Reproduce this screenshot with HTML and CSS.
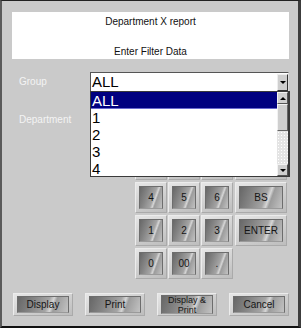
FILE: index.html
```html
<!DOCTYPE html>
<html lang="en">
<head>
  <meta charset="UTF-8">
  <title>Department X report</title>
  <link rel="stylesheet" href="styles.css">
</head>
<body>
  <div class="window">
    <div class="header">
      <div>Department X report</div>
      <div>Enter Filter Data</div>
    </div>

    <div class="row">
      <label class="lbl">Group</label>
      <div class="combo">
        <span class="combo-text">ALL</span>
        <span class="drop-btn"><span class="arrow down"></span></span>

        <div class="droplist">
          <ul class="items">
            <li class="sel">ALL</li>
            <li>1</li>
            <li>2</li>
            <li>3</li>
            <li>4</li>
          </ul>
          <div class="scrollbar">
            <span class="sb-btn"><span class="arrow up"></span></span>
            <span class="sb-thumb"></span>
            <span class="sb-track"></span>
            <span class="sb-btn"><span class="arrow down"></span></span>
          </div>
        </div>
      </div>
    </div>

    <div class="row dept">
      <label class="lbl">Department</label>
      <div class="combo plain"></div>
    </div>

    <div class="keypad">
      <div class="key"><span class="face">7</span></div>
      <div class="key"><span class="face">8</span></div>
      <div class="key"><span class="face">9</span></div>
      <div class="key"><span class="face">CLR</span></div>
      <div class="key"><span class="face">4</span></div>
      <div class="key"><span class="face">5</span></div>
      <div class="key"><span class="face">6</span></div>
      <div class="key"><span class="face">BS</span></div>
      <div class="key"><span class="face">1</span></div>
      <div class="key"><span class="face">2</span></div>
      <div class="key"><span class="face">3</span></div>
      <div class="key"><span class="face">ENTER</span></div>
      <div class="key"><span class="face">0</span></div>
      <div class="key"><span class="face">00</span></div>
      <div class="key"><span class="face">.</span></div>
    </div>

    <div class="actions">
      <div class="key act"><span class="face">Display</span></div>
      <div class="key act"><span class="face">Print</span></div>
      <div class="key act tight"><span class="face two">Display &amp;<br>Print</span></div>
      <div class="key act"><span class="face">Cancel</span></div>
    </div>
  </div>
</body>
</html>
```

FILE: styles.css
```css
body {
  margin: 0;
  background: #cacaca;
  font-family: "Liberation Sans", Arial, sans-serif;
}
.window {
  box-sizing: border-box;
  width: 301px;
  height: 328px;
  background: #cacaca;
  border-left: 2px solid #5a5a5a;
  border-right: 3px solid #3c3c3c;
  border-top: 1px solid #222;
  border-bottom: 2px solid #111;
  padding: 11px 9px 0 10px;
}
.header {
  height: 47px;
  background: #fff;
  display: flex;
  flex-direction: column;
  justify-content: space-between;
  align-items: center;
  padding: 4px 0 2px;
  box-sizing: border-box;
  font-size: 10px;
  color: #111;
  margin-bottom: 13px;
}
.row {
  display: flex;
  align-items: center;
  height: 19px;
}
.row.dept {
  margin-top: 19px;
}
.lbl {
  width: 78px;
  padding-left: 7px;
  box-sizing: border-box;
  font-size: 10px;
  color: #f4f4f4;
}
.combo {
  position: relative;
  width: 199px;
  height: 19px;
  box-sizing: border-box;
  background: #fff;
  border-top: 1px solid #555;
  border-left: 1px solid #555;
  border-right: 1px solid #ddd;
  display: flex;
  align-items: center;
}
.combo-text {
  flex: 1;
  font-size: 15px;
  line-height: 18px;
  padding-left: 1px;
  color: #000;
}
.drop-btn {
  width: 11px;
  height: 17px;
  box-sizing: border-box;
  background: #cfcfcf;
  border: 1px solid #333;
  border-top-color: #eee;
  border-left-color: #eee;
  display: flex;
  align-items: center;
  justify-content: center;
}
.arrow {
  width: 0;
  height: 0;
  border-left: 3px solid transparent;
  border-right: 3px solid transparent;
}
.arrow.down {
  border-top: 3px solid #000;
}
.arrow.up {
  border-bottom: 3px solid #000;
}
.droplist {
  position: absolute;
  left: -1px;
  top: 18px;
  width: 200px;
  height: 86px;
  box-sizing: border-box;
  background: #fff;
  border: 1px solid #3a3a3a;
  border-right-width: 2px;
  display: flex;
  z-index: 2;
}
.items {
  list-style: none;
  margin: 0;
  padding: 0;
  flex: 1;
}
.items li {
  height: 17px;
  line-height: 18px;
  font-size: 15px;
  padding-left: 1px;
  color: #000;
}
.items li.sel {
  background: #000080;
  color: #fff;
  height: 16px;
  line-height: 17px;
  border-bottom: 1px solid #6a6ad0;
}
.scrollbar {
  width: 11px;
  display: flex;
  flex-direction: column;
}
.sb-btn {
  height: 12px;
  box-sizing: border-box;
  background: #cfcfcf;
  border: 1px solid #555;
  border-top-color: #f2f2f2;
  border-left-color: #f2f2f2;
  display: flex;
  align-items: center;
  justify-content: center;
}
.sb-thumb {
  height: 27px;
  box-sizing: border-box;
  background: #cfcfcf;
  border: 1px solid #666;
  border-top-color: #f2f2f2;
  border-left-color: #f2f2f2;
}
.sb-track {
  flex: 1;
  background-color: #e4e4e4;
  background-image: radial-gradient(#fff 0.8px, transparent 1px);
  background-size: 3px 3px;
}
.keypad {
  display: grid;
  grid-template-columns: 32px 32px 32px 53px;
  grid-auto-rows: 31px;
  column-gap: 1px;
  row-gap: 2px;
  margin: 20px 0 0 123px;
}
.keypad .key:nth-child(4n) {
  margin-left: 1px;
}
.key {
  box-sizing: border-box;
  padding: 3px;
  background: linear-gradient(160deg, #e6e6e6, #bdbdbd);
  border: 1px solid #aaa;
  border-top-color: #ececec;
  border-left-color: #ececec;
  display: flex;
}
.face {
  flex: 1;
  display: flex;
  align-items: center;
  justify-content: center;
  font-size: 10px;
  color: #151515;
  border: 1px solid #6d6d6d;
  border-bottom-color: #9a9a9a;
  background: linear-gradient(110deg, #676767 0%, #858585 30%, #a5a5a5 58%, #d6d6d6 66%, #9c9c9c 72%, #c3c3c3 100%);
}
.actions {
  display: flex;
  justify-content: space-between;
  margin: 14px 0 0 1px;
}
.key.act {
  width: 60px;
  height: 23px;
  padding: 2px 3px;
}
.key.act.tight {
  padding: 1px 3px;
}
.face.two {
  font-size: 9px;
  line-height: 10px;
  text-align: center;
}
```
